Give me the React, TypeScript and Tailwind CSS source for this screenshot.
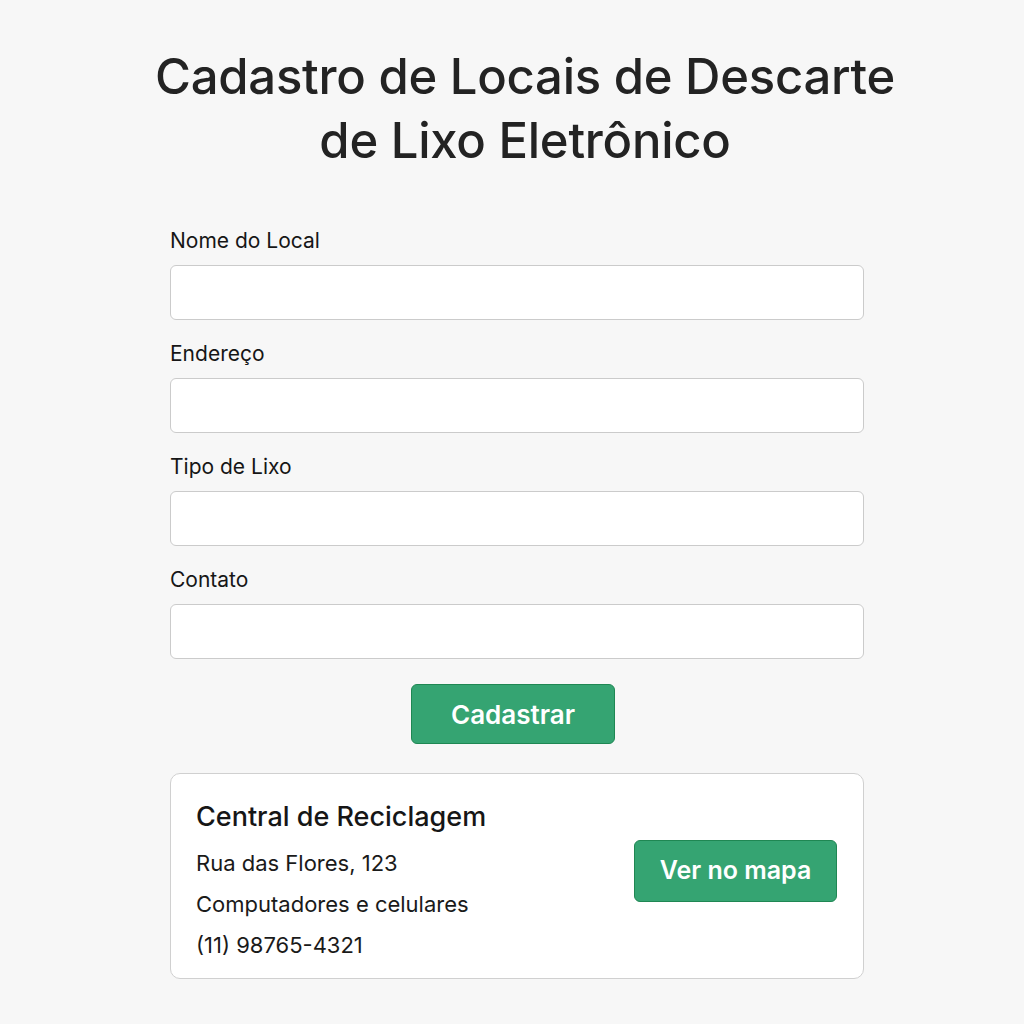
import React from "react";

const fields = ["Nome do Local", "Endereço", "Tipo de Lixo", "Contato"];

const App = () => {
  return (
    <div
      className="min-h-[1024px] bg-[#f7f7f7] text-[#1a1a1a] pt-[45px]"
      style={{ fontFamily: "Inter, 'Noto Sans', sans-serif" }}
    >
      <h1 className="ml-[125px] w-[800px] text-center text-[49px] leading-[64px] font-medium text-[#232323] tracking-[-0.25px]">
        Cadastro de Locais de Descarte
        <br />
        de Lixo Eletrônico
      </h1>

      <form className="ml-[170px] w-[694px] mt-[54px] flex flex-col">
        {fields.map((f) => (
          <div key={f} className="flex flex-col mb-[20px]">
            <label className="text-[21px] leading-[28px] mb-[10px] text-[#161616]">{f}</label>
            <input
              type="text"
              className="h-[55px] rounded-[6px] border border-[#cbcbcb] bg-white px-3 outline-none"
            />
          </div>
        ))}
        <button
          type="button"
          className="ml-[241px] mt-[5px] w-[204px] h-[60px] rounded-[6px] bg-[#35a472] border border-[#1f8753] text-white text-[26px] font-semibold"
        >
          Cadastrar
        </button>

        <div className="mt-[29px] h-[206px] rounded-[10px] border border-[#d0d0d0] bg-white pl-[25px] pr-[26px] pt-[25px] flex items-start justify-between">
          <div className="flex flex-col">
            <h2 className="text-[27px] leading-[36px] font-medium text-[#161616]">Central de Reciclagem</h2>
            <p className="text-[22px] leading-[41px] mt-[8px]">Rua das Flores, 123</p>
            <p className="text-[22px] leading-[41px]">Computadores e celulares</p>
            <p className="text-[22px] leading-[41px]">(11) 98765-4321</p>
          </div>
          <button
            type="button"
            className="mt-[41px] w-[203px] h-[62px] rounded-[6px] bg-[#35a472] border border-[#1f8753] text-white text-[25px] font-semibold"
          >
            Ver no mapa
          </button>
        </div>
      </form>
    </div>
  );
};

export default App;
